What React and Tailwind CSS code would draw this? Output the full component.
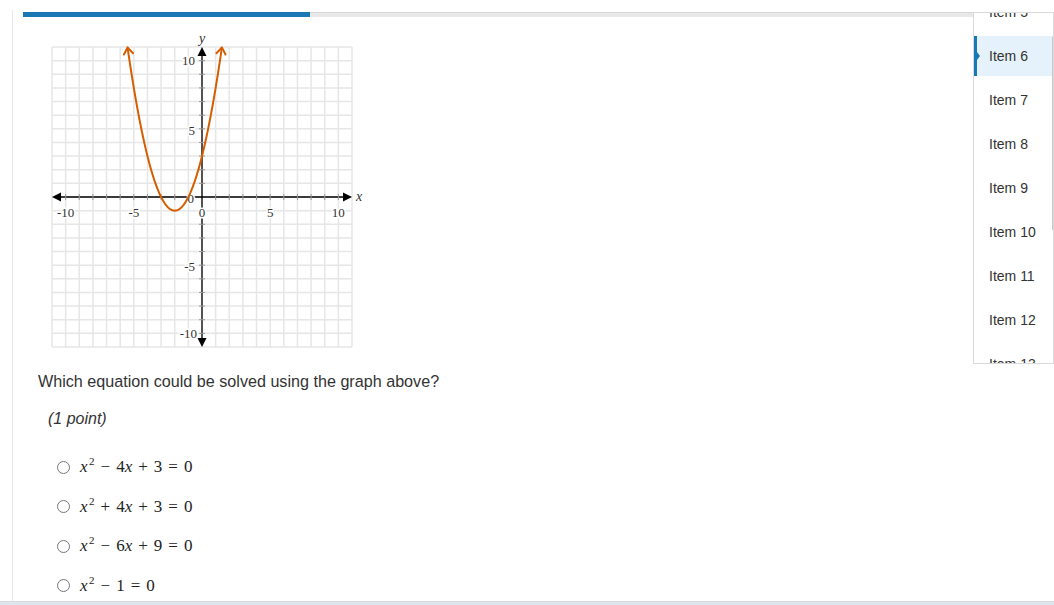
import React from "react";

const U = 300 / 22;
const px = (x) => 150 + x * U;
const py = (y) => 150 - y * U;

// curve y = x^2 + 4x + 3
const f = (x) => (x + 2) * (x + 2) - 1;

const curvePoints = () => {
  const pts = [];
  for (let x = -5.46; x <= 1.4601; x += 0.02) {
    pts.push(`${px(x).toFixed(2)},${py(f(x)).toFixed(2)}`);
  }
  return pts.join(" ");
};

// open chevron at the end of the curve
const Chevron = ({ x, dir }) => {
  const tx = px(x);
  const ty = py(f(x));
  const slope = 2 * (x + 2);
  let dx = dir;
  let dy = -slope * dir;
  const len = Math.hypot(dx, dy);
  dx /= len;
  dy /= len;
  const a = (35 * Math.PI) / 180;
  const l = 8;
  const back = (ang) => {
    const c = Math.cos(ang);
    const s = Math.sin(ang);
    // rotate the backwards vector by ang
    const bx = -dx;
    const by = -dy;
    return [tx + (bx * c - by * s) * l, ty + (bx * s + by * c) * l];
  };
  const p1 = back(a);
  const p2 = back(-a);
  return (
    <polyline
      points={`${p1[0]},${p1[1]} ${tx},${ty} ${p2[0]},${p2[1]}`}
      fill="none"
      stroke="#d55e00"
      strokeWidth="2"
      strokeLinecap="round"
      strokeLinejoin="round"
    />
  );
};

const Graph = () => {
  const lines = [];
  for (let k = -11; k <= 11; k++) lines.push(k);
  const units = [];
  for (let k = -10; k <= 10; k++) if (k !== 0) units.push(k);
  const label = {
    fontFamily: '"Liberation Serif", "DejaVu Serif", serif',
    fontSize: 13,
    fill: "#333",
    stroke: "#fff",
    strokeWidth: 3,
    paintOrder: "stroke",
  };
  return (
    <svg width="300" height="300" viewBox="0 0 300 300" className="overflow-visible block">
      {lines.map((k) => (
        <g key={k}>
          <line x1={px(k)} y1="0" x2={px(k)} y2="300" stroke="#e6e6e6" strokeWidth="1.5" />
          <line x1="0" y1={py(k)} x2="300" y2={py(k)} stroke="#e6e6e6" strokeWidth="1.5" />
        </g>
      ))}
      {/* axes */}
      <line x1="7" y1="150" x2="293" y2="150" stroke="#000" strokeWidth="1.3" />
      <line x1="150" y1="7" x2="150" y2="293" stroke="#000" strokeWidth="1.3" />
      <polygon points="0,150 9,145.5 9,154.5" fill="#000" />
      <polygon points="300,150 291,145.5 291,154.5" fill="#000" />
      <polygon points="150,0 145.5,9 154.5,9" fill="#000" />
      <polygon points="150,300 145.5,291 154.5,291" fill="#000" />
      {units.map((k) => (
        <g key={k}>
          <line x1={px(k)} y1="147" x2={px(k)} y2="153" stroke="#999" strokeWidth="1" />
          <line x1="147" y1={py(k)} x2="153" y2={py(k)} stroke="#999" strokeWidth="1" />
        </g>
      ))}
      {/* x labels */}
      {[-10, -5, 0, 5, 10].map((k) => (
        <text key={k} x={px(k)} y="170" textAnchor="middle" style={label}>
          {k < 0 ? `-${-k}` : k}
        </text>
      ))}
      {/* y labels */}
      <text x="143" y="18" textAnchor="end" style={label}>10</text>
      <text x="143" y="88" textAnchor="end" style={label}>5</text>
      <text x="142" y="156" textAnchor="end" style={label}>0</text>
      <text x="143" y="224" textAnchor="end" style={label}>-5</text>
      <text x="145" y="291" textAnchor="end" style={label}>-10</text>
      <text x="150" y="-4" textAnchor="middle" style={{ ...label, fontSize: 14, fontStyle: "italic", strokeWidth: 0 }}>y</text>
      <text x="304" y="154" style={{ ...label, fontSize: 14, fontStyle: "italic", strokeWidth: 0 }}>x</text>
      {/* curve */}
      <polyline points={curvePoints()} fill="none" stroke="#d55e00" strokeWidth="2" strokeLinejoin="round" />
      <Chevron x={1.46} dir={1} />
      <Chevron x={-5.46} dir={-1} />
    </svg>
  );
};

const X = () => <i>x</i>;

const Sq = () => <sup className="text-[11px] ml-[1.5px] relative -top-[7px]">2</sup>;

const Op = ({ children }) => <span className="mx-[6px]">{children}</span>;

const options = [
  <>
    <X />
    <Sq />
    <Op>−</Op>4<X />
    <Op>+</Op>3<Op>=</Op>0
  </>,
  <>
    <X />
    <Sq />
    <Op>+</Op>4<X />
    <Op>+</Op>3<Op>=</Op>0
  </>,
  <>
    <X />
    <Sq />
    <Op>−</Op>6<X />
    <Op>+</Op>9<Op>=</Op>0
  </>,
  <>
    <X />
    <Sq />
    <Op>−</Op>1<Op>=</Op>0
  </>,
];

const items = [5, 6, 7, 8, 9, 10, 11, 12, 13];

const Sidebar = () => (
  <div className="absolute right-0 top-[12px] w-[81px] h-[352px] border border-[#d9d9d9] bg-white overflow-hidden">
    <div className="-mt-[23px]">
      {items.map((n) =>
        n === 6 ? (
          <div key={n} className="h-[44px] py-[2px]">
            <div className="relative h-10 flex items-center bg-[#e6f2fb] border-l-[3px] border-[#1a78b5] pl-[12px] text-[14px] text-[#333]">
              <span className="absolute left-0 top-1/2 -translate-y-1/2 border-y-[4px] border-y-transparent border-l-[3px] border-l-[#1a78b5]" />
              Item {n}
            </div>
          </div>
        ) : (
          <div key={n} className="h-[44px] py-[2px]">
            <div className="h-10 flex items-center pl-[15px] text-[14px] text-[#333]">Item {n}</div>
          </div>
        )
      )}
    </div>
    <div className="absolute right-0 top-[24px] h-[193px] w-px bg-[#c8c8c8]" />
  </div>
);

export default function App() {
  return (
    <div
      className="relative w-[1054px] h-[605px] bg-white flex flex-col overflow-hidden"
      style={{ fontFamily: '"Liberation Sans", Arial, sans-serif' }}
    >
      <div className="flex-1 flex min-h-0">
        <div className="w-[12px] shrink-0" />
        <div className="flex-1 mt-[10px] border-l border-[#e8e8e8] min-h-0">
          <div className="ml-[10px] mt-[2px] h-[5px] flex bg-[#e8e8e8] border-t border-[#d8d8d8]">
            <div className="w-[287px] -mt-px h-[5px] bg-[#1a78b5]" />
          </div>
          <div className="ml-[39px] mt-[30px]">
            <Graph />
          </div>
          <p className="ml-[25px] mt-[22px] text-[16.15px] leading-6 text-[#333]">
            Which equation could be solved using the graph above?
          </p>
          <p className="ml-[35px] mt-[14px] text-[16px] leading-6 italic text-[#333]">(1 point)</p>
          <div className="ml-[44px] mt-[24px] flex flex-col gap-[15.5px]">
            {options.map((o, i) => (
              <div key={i} className="flex items-center h-6">
                <span className="w-[13px] h-[13px] rounded-full border border-[#767676] bg-white shrink-0" />
                <span
                  className="ml-[10px] text-[17px] leading-6 text-[#222] whitespace-nowrap"
                  style={{ fontFamily: '"Liberation Serif", "DejaVu Serif", serif' }}
                >
                  {o}
                </span>
              </div>
            ))}
          </div>
        </div>
      </div>
      <div className="h-[4px] bg-[#dfe5ec] border-t border-[#d3dae3] shrink-0" />
      <Sidebar />
    </div>
  );
}
